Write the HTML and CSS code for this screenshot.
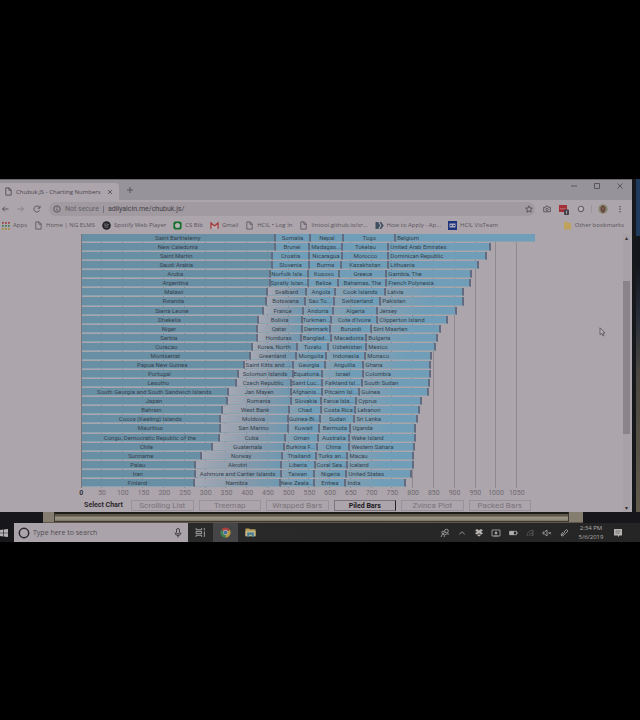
FILE: index.html
```html
<!DOCTYPE html>
<html lang="en">
<head>
<meta charset="utf-8">
<title>Chubuk.JS - Charting Numbers</title>
<link rel="stylesheet" href="styles.css">
</head>
<body>
<svg class="defs" aria-hidden="true">
  <symbol id="doc" viewBox="0 0 9 10"><path d="M1.5 1h3.8l2.2 2.3V9h-6zM5 1v2.6h2.5" fill="none" stroke="currentColor" stroke-width=".9"/></symbol>
</svg>
<div class="screen">
  <div class="monitor">
    <div class="browser">
      <header>
        <div class="tabs">
          <div class="tab"><svg class="icon"><use href="#doc"/></svg><span>Chubuk.JS - Charting Numbers</span>
            <button aria-label="Close tab"><svg viewBox="0 0 6 6"><path d="M1 1l4 4M5 1L1 5"/></svg></button></div>
          <button class="new" aria-label="New tab"><svg viewBox="0 0 8 8"><path d="M4 1v6M1 4h6"/></svg></button>
          <div class="controls">
            <button aria-label="Minimize"><svg viewBox="0 0 8 8"><path d="M1 4h6"/></svg></button>
            <button aria-label="Maximize"><svg viewBox="0 0 8 8"><path d="M1.5 1.5h5v5h-5z"/></svg></button>
            <button aria-label="Close"><svg viewBox="0 0 8 8"><path d="M1.5 1.5l5 5M6.500 1.500l-5 5"/></svg></button>
          </div>
        </div>
        <div class="toolbar">
          <button aria-label="Back"><svg viewBox="0 0 8 8"><path d="M7.500 4H1.500M4 1.500L1.500 4 4 6.500"/></svg></button>
          <button class="dim" aria-label="Forward"><svg viewBox="0 0 8 8"><path d="M.5 4h6M4 1.500L6.500 4 4 6.500"/></svg></button>
          <button aria-label="Reload"><svg viewBox="0 0 8 8"><path d="M6.600 5.300A3 3 0 1 1 6.500 2.500M7 .8v2.400H4.600"/></svg></button>
          <div class="address">
            <svg viewBox="0 0 8 8"><circle cx="4" cy="4" r="3.200"/><path d="M4 3.500v2.300M4 2v.8"/></svg>
            <label for="url">Not secure</label><i></i>
            <input id="url" value="adilyalcin.me/chubuk.js/">
            <button aria-label="Bookmark this page"><svg viewBox="0 0 8 8"><path d="M4 .8l1 2.200 2.400.2-1.800 1.600.6 2.400L4 6l-2.200 1.200.6-2.400L.6 3.200 3 3z"/></svg></button>
          </div>
          <button aria-label="Camera extension"><svg viewBox="0 0 8 8"><path d="M.7 2.300h1.600L3 1.200h2l.7 1.100h1.600v4.500H.7z"/><circle cx="4" cy="4.400" r="1.200"/></svg></button>
          <button class="ext" aria-label="Extension, 1 notice"><svg viewBox="0 0 10 11"><path fill="#a52f37" stroke="none" d="M0 1h8v7H0z"/><path stroke="#c9a6ac" stroke-dasharray="1.300 .7" d="M1.200 4.800h6"/><rect x="5" y="5.500" width="5" height="5.500" rx="1" fill="#444248" stroke="none"/><path stroke="#bbb" d="M7.500 6.800v3"/></svg></button>
          <button aria-label="Sphere extension"><svg viewBox="0 0 8 8"><circle cx="4" cy="4" r="2.800"/><circle cx="3.500" cy="3.500" r="1.500" fill="#bcb7bc" stroke="none"/></svg></button>
          <i class="rule"></i>
          <button class="face" aria-label="Profile"><svg viewBox="0 0 10 10"><circle cx="5" cy="5" r="4.800" fill="#8c8b78" stroke="none"/><path fill="#5d4138" stroke="none" d="M2.500 3.500Q5-.5 7.500 3.500V6q-2.500 6-5 0z"/><path stroke="#9c7568" d="M3.500 4h3M5 4v3"/></svg></button>
          <button class="menu" aria-label="Menu"><svg viewBox="0 0 8 8"><path stroke-width="1.200" stroke-dasharray="1.200 1.300" d="M4 1v6.500"/></svg></button>
        </div>
        <nav>
          <a href="#"><svg class="icon" viewBox="0 0 9 9"><g fill="none" stroke-width="1.700" stroke-dasharray="1.700 1.300"><path stroke="#9e3c40" d="M1 1.800h7.700"/><path stroke="#3f7a5a" d="M1 4.800h7.700"/><path stroke="#a68a3a" d="M1 7.800h7.700"/></g></svg>Apps</a>
          <a href="#"><svg class="icon"><use href="#doc"/></svg>Home | NG ELMS</a>
          <a href="#"><svg class="icon" viewBox="0 0 9 9"><circle cx="4.500" cy="4.500" r="4.300" fill="#242227"/><path d="M2 3.200q2.500-.7 5 .5M2.300 4.700q2-.5 4.200.5M2.500 6.100q1.700-.4 3.400.4" fill="none" stroke="#8f8b90" stroke-width=".7"/></svg>Spotify Web Player</a>
          <a href="#"><svg class="icon" viewBox="0 0 9 9"><rect x=".4" y=".4" width="8.200" height="8.200" rx="2" fill="#16712d"/><circle cx="4.500" cy="4.500" r="2.500" fill="#b7b4b8"/></svg>CS Bib</a>
          <a href="#"><svg class="icon" viewBox="0 0 9 9"><path d="M1 7.800V2l3.500 3L8 2v5.800" fill="#bcb3b7" stroke="#a63b3c" stroke-width="1.300"/></svg>Gmail</a>
          <a href="#"><svg class="icon"><use href="#doc"/></svg>HCIL • Log In</a>
          <a href="#"><svg class="icon"><use href="#doc"/></svg>lintool.github.io/sr...</a>
          <a href="#"><svg class="icon" viewBox="0 0 9 9"><path d="M.5 1h2.700l2 3.500-2 3.500H.5z" fill="#3e5061"/><path d="M4.500 1h1.700l2.500 3.500L6.200 8H4.500l2-3.500z" fill="#3e5061"/></svg>How to Apply - Ap...</a>
          <a href="#"><svg class="icon" viewBox="0 0 9 9"><path d="M0 0h9v9H0z" fill="#1f327e"/><path d="M1.500 2.500h6v4h-6z" fill="#aaa9ba"/><path d="M2 4.500h2M5 4.500h2" stroke="#1f327e"/></svg>HCIL VisTeam</a>
          <a class="other" href="#"><svg class="icon" viewBox="0 0 9 9"><path d="M1 .8h3l1 1.200h3v6.500H1z" fill="#bfa25c"/></svg>Other bookmarks</a>
        </nav>
      </header>
      <main>
        <section class="content">
          <div class="figure">
            <div class="lines" id="lines"></div>
            <div class="plot" id="plot"></div>
          </div>
          <div class="axis" id="axis"></div>
          <div class="charts">
            <b>Select Chart</b>
            <button>Scrolling List</button><button>Treemap</button><button>Wrapped Bars</button><button class="on">Piled Bars</button><button>Zvinca Plot</button><button>Packed Bars</button>
          </div>
        </section>
        <div class="scroll"><span>▴</span><div></div><span>▾</span></div>
        <svg class="cursor" viewBox="0 0 7 10"><path d="M1 .8v7l1.800-1.500L4 9l1-.5-1.100-2.500H6z" fill="#b9b4b9" stroke="#565257" stroke-width=".8"/></svg>
      </main>
    </div>
    <div class="edge"></div>
    <div class="room"></div>
  </div>
  <div class="desktop"><div class="paper"><div></div></div></div>
  <footer>
    <button class="start" aria-label="Start"><svg viewBox="0 0 8 8"><path fill="#b5b2b6" stroke="none" d="M0 1l3.200-.5v3.200H0zM3.800.4L8 0v3.700H3.800zM0 4.300h3.200v3.200L0 7zM3.800 4.300H8V8l-4.200-.5z"/></svg></button>
    <label class="search"><svg viewBox="0 0 12 12"><circle cx="6" cy="6" r="4.700" stroke-width="1.500"/></svg><input placeholder="Type here to search" aria-label="Search"><svg viewBox="0 0 12 12"><rect x="4.500" y="1.500" width="3" height="5.500" rx="1.500"/><path d="M3 5.500q0 3 3 3t3-3M6 8.500v2"/></svg></label>
    <button class="app" aria-label="Task view"><svg viewBox="0 0 10 10"><path d="M1 1v1.500h5V1M1 9V7.500h5V9M1 4h5v2H1zM8.500 1v2M8.500 4v5"/></svg></button>
    <button class="app lit" aria-label="Chrome"><svg viewBox="0 0 12 12"><g stroke="none"><path fill="#a8433b" d="M6 6L1.200 3.200a5.600 5.600 0 0 1 9.700.1z"/><path fill="#b89a3d" d="M6 6l4.900-2.700A5.600 5.600 0 0 1 6 11.600z"/><path fill="#3f8250" d="M6 6v5.600A5.600 5.600 0 0 1 1.200 3.200z"/><circle cx="6" cy="6" r="2.700" fill="#b9b7ba"/><circle cx="6" cy="6" r="2" fill="#40699d"/></g></svg></button>
    <button class="app" aria-label="File Explorer"><svg viewBox="0 0 12 12"><g stroke="none"><path fill="#b39a54" d="M.5 1.500h4l1 1h6V10H.5z"/><path fill="#c2b283" d="M.5 4h11v6H.5z"/><path fill="#3e7e9c" d="M2.500 6h7v5H7.500V8.500h-3V11h-2z"/></g></svg></button>
    <div class="tray">
      <svg viewBox="0 0 10 10"><circle cx="6.500" cy="3" r="1.800"/><circle cx="3" cy="4.500" r="1.300"/><path d="M1 9q1-4 3.500-2.500M4 9q1-4 5-3"/></svg>
      <svg viewBox="0 0 10 10"><path d="M2.300 6.300L5 3.700l2.700 2.600"/></svg>
      <svg viewBox="0 0 10 10"><path stroke="none" fill="#b5b2b0" d="M3 1l2 1.300L7 1l2 1.400L7 3.800l2 1.500-2 1.400-2-1.400-2 1.400-2-1.400 2-1.500-2-1.400zM3.200 7.400L5 6.200l1.800 1.200L5 8.600z"/></svg>
      <svg viewBox="0 0 10 10"><path d="M1 2h8v6H1zM3 8h4"/><circle cx="5" cy="5" r="1" fill="#b5b2b0"/></svg>
      <svg viewBox="0 0 10 10"><path d="M1.500 3.300h7v3.400h-7zM9.300 4.300v1.400"/><path fill="#b5b2b0" d="M2 3.500h3.500v3H2z"/></svg>
      <svg class="faint" viewBox="0 0 10 10"><path d="M2 8Q2 3 8 2v6M4 8q0-3 4-3.500M6 8q0-1 2-1.500"/></svg>
      <svg viewBox="0 0 10 10"><path d="M1 4h1.500L5 2v6L2.500 6H1zM6.500 4l2.300 2.300M8.800 4L6.500 6.300"/></svg>
      <svg viewBox="0 0 10 10"><path d="M2 8l2-2M3.500 4.500l2 2-2 1.500-1.500-1zM5 4l2.500-2.500 1.500 1.500L6.500 5.500z"/></svg>
    </div>
    <div class="clock">2:34 PM<br>5/6/2019</div>
    <button class="notice" aria-label="Notifications"><svg viewBox="0 0 10 10"><path fill="#b5b2b0" stroke="none" d="M1 1h8v6.500H6.500L5 9.300V7.500H1z"/><path stroke="#6b686a" d="M2.500 3h5M2.500 5h4"/></svg></button>
  </footer>
</div>
<script src="chart.js"></script>
</body>
</html>
```
FILE: styles.css
```css
* { box-sizing: border-box; }
body { margin: 0; background: #000; color: #4b474d; font: 6px/8px "Open Sans", "Noto Sans", sans-serif; }
button, input { font: inherit; color: inherit; border: 0; background: none; padding: 0; margin: 0; }
svg { display: block; width: 8px; height: 8px; fill: none; stroke: currentColor; stroke-width: .8; flex: none; }
a { color: inherit; text-decoration: none; }
.defs { position: absolute; width: 0; height: 0; }
.icon { width: 9px; height: 9px; stroke: none; }
.screen { margin-top: 179px; background: #242326; }
.monitor { display: flex; }
.browser { flex: 1; min-width: 0; background: #aca5ab; }
.edge { width: 4px; background: #17181c; }
.room { width: 4px; background: linear-gradient(#1e3a5c 0 17%, #13161b 17% 25%, #252b38 40%, #4b4740 58%, #625a4b); }

.tabs { display: flex; align-items: center; height: 21px; background: #97939a; border-top: 1px solid #6d6a6f; }
.tab { display: flex; align-items: center; align-self: flex-end; height: 17px; width: 119px; padding: 0 6px 0 4px; gap: 3px; background: #aca5ab; border-radius: 0 4px 0 0; }
.tab span { flex: 1; white-space: nowrap; }
.tab button svg { width: 6px; height: 6px; }
.new { margin-left: 7px; }
.controls { display: flex; gap: 15px; margin-left: auto; margin-right: 8px; align-self: flex-start; padding-top: 2px; }
.toolbar { display: flex; align-items: center; gap: 8px; height: 18px; padding: 0 8px 0 1px; font-size: 7px; }
.dim { opacity: .45; }
.address { flex: 1; display: flex; align-items: center; gap: 4px; height: 14px; padding: 0 2px 0 4px; border-radius: 7px; background: #a19ba1; font-family: Roboto, sans-serif; }
.address label { color: #666168; white-space: nowrap; }
.address i { width: 1px; height: 7px; background: #777278; }
.address input { flex: 1; min-width: 0; color: #464248; height: 10px; }
.ext svg { width: 10px; height: 11px; }
.rule { width: 1px; height: 8px; margin: 0 -2px; background: #9b959b; }
.face svg { width: 10px; height: 10px; }
nav { display: flex; align-items: center; gap: 7px; height: 16px; padding: 0 8px 2px 1px; white-space: nowrap; color: #5a555c; }
nav a { display: flex; align-items: center; gap: 3px; }
nav a.other { margin-left: auto; }

main { display: flex; position: relative; height: 278px; }
.content { flex: 1; min-width: 0; padding-left: 81px; padding-right: 88px; font-family: Roboto, sans-serif; }
.figure { display: grid; height: 254px; }
.lines, .plot { grid-area: 1 / 1; min-width: 0; }
.lines { display: flex; margin-right: 18px; }
.lines span { flex: 1; border-right: 1px solid #8d898f; }
.plot { display: grid; grid-auto-rows: 1fr; border-left: 1px solid #77737a; }
.row { display: flex; padding-bottom: 1px; min-height: 0; position: relative; }
.seg { flex: none; height: 100%; border: 0 solid #626b7f; border-right-width: 2px; border-bottom: 1px solid #8aa3b2; background: #709eb8; color: #36424d; line-height: 7px; text-align: center; white-space: nowrap; overflow: hidden; }
.seg:first-child { background: #698fa5; }
.row:first-child .seg:last-child { border-right-color: #709eb8; }
.seg:last-child { text-align: left; padding-left: 1px; }
.pale { background: linear-gradient(to right, #a4a8b4, #8599ab 60%, #6f98b0); }
.soft { background: linear-gradient(to right, #869fb1, #709eb8 60%); }
.axis { display: flex; height: 10px; margin: 0 8px 2px -10px; align-items: center; font-size: 7px; color: #6f6a71; }
.axis span { flex: 1 0 0; min-width: 0; display: flex; justify-content: center; }
.axis span:first-child { color: #333036; font-weight: 700; }
.charts { display: flex; gap: 5px; margin-right: 4px; height: 11px; line-height: 8px; font-size: 8px; }
.charts b { width: 45px; padding-top: 1px; text-align: center; font-size: 7px; font-weight: 700; color: #2c292e; white-space: nowrap; }
.charts button { flex: 1; border: 1px solid #98929a; color: #79747b; white-space: nowrap; }
.charts .on { border-color: #7b767d; border-right-color: #242127; color: #1a181c; font-weight: 700; font-size: 7px; }
.scroll { width: 7px; margin-right: 2px; background: #a8a2a8; display: flex; flex-direction: column; justify-content: space-between; text-align: center; color: #343136; }
.scroll div { height: 153px; margin-bottom: 32px; background: #89848a; }
.cursor { position: absolute; left: 94.700%; top: 93px; width: 7px; height: 10px; }

.desktop { height: 11px; padding: 0 57px 0 43px; background: #17171b; }
.paper { height: 11px; padding: 0 14px 0 11px; background: #857e70; border-bottom: 1px solid #5e574b; }
.paper div { height: 10px; border: 1px solid #3e3932; border-top: 2px solid #1e1b18; background: linear-gradient(#5e5749 2px, #969080 3px 5px, #777061); }

footer { display: flex; align-items: center; height: 19px; background: linear-gradient(to right, #171719, #292929 30%, #262525); color: #b0adae; }
.start { width: 14px; }
.search { display: flex; align-items: center; width: 174px; height: 19px; padding: 0 4px; gap: 3px; background: #aaa3aa; color: #29272c; }
.search svg { width: 12px; height: 12px; }
.search input { flex: 1; min-width: 0; font-size: 7px; }
.search input::placeholder { color: #514c53; opacity: 1; }
.app { width: 25px; height: 19px; display: grid; place-items: center; }
.app svg { width: 11px; height: 11px; }
.lit { background: #454447; }
.tray { display: flex; gap: 7px; margin-left: auto; }
.tray svg { width: 10px; height: 10px; }
.faint { opacity: .4; }
.clock { width: 44px; text-align: center; line-height: 9px; }
.notice { margin-right: 17px; }
.notice svg { width: 10px; height: 10px; }
```
FILE: chart.js
```js
// Each row: five segment names, then the right end of each segment.
const rows = `Saint Barthelemy|Somalia|Nepal|Togo|Belgium|193|229|262|314|454
New Caledonia|Brunei|Madagas...|Tokelau|United Arab Emirates|193|228|261|307|409
Saint Martin|Croatia|Nicaragua|Morocco|Dominican Republic|190|228|261|307|405
Saudi Arabia|Slovenia|Burma|Kazakhstan|Lithuania|190|228|260|307|397
Aruba|Norfolk Isla...|Kosovo|Greece|Gambia, The|188|227|258|305|390
Argentina|Spratly Islan...|Belize|Bahamas, The|French Polynesia|188|227|257|305|389
Malawi|Svalbard|Angola|Cook Islands|Latvia|185|225|254|304|382
Rwanda|Botswana|Sao To...|Switzerland|Pakistan|184|224|253|299|382
Sierra Leone|France|Andorra|Algeria|Jersey|181|221|252|296|375
Dhekelia|Bolivia|Turkmen...|Cote d'Ivoire|Clipperton Island|176|220|250|296|366
Niger|Qatar|Denmark|Burundi|Sint Maarten|175|220|249|290|359
Serbia|Honduras|Banglad...|Macedonia|Bulgaria|175|219|250|285|356
Curacao|Korea, North|Tuvalu|Uzbekistan|Mexico|170|215|247|285|354
Montserrat|Greenland|Mongolia|Indonesia|Monaco|168|214|245|284|350
Papua New Guinea|Saint Kitts and ...|Georgia|Anguilla|Ghana|162|211|244|282|349
Portugal|Solomon Islands|Equatoria...|Israel|Colombia|156|211|241|282|349
Lesotho|Czech Republic|Saint Luc...|Falkland Isl...|South Sudan|154|209|241|281|348
South Georgia and South Sandwich Islands|Jan Mayen|Afghanis...|Pitcairn Isl...|Guinea|146|209|241|278|347
Japan|Romania|Slovakia|Faroe Isla...|Cyprus|145|209|240|275|340
Bahrain|West Bank|Chad|Costa Rica|Lebanon|140|207|240|274|338
Cocos (Keeling) Islands|Moldova|Guinea-Bi...|Sudan|Sri Lanka|138|206|239|273|336
Mauritius|San Marino|Kuwait|Bermuda|Uganda|138|206|238|269|334
Congo, Democratic Republic of the|Cuba|Oman|Australia|Wake Island|137|203|237|268|334
Chile|Guatemala|Burkina F...|China|Western Sahara|130|202|236|268|333
Suriname|Norway|Thailand|Turks an...|Macau|119|200|235|266|332
Palau|Akrotiri|Liberia|Coral Sea...|Iceland|113|199|234|266|332
Iran|Ashmore and Cartier Islands|Taiwan|Nigeria|United States|113|199|233|265|330
Finland|Namibia|New Zeala...|Eritrea|India|112|198|233|264|324`;

const plot = document.getElementById('plot');
rows.split('\n').forEach((line, r) => {
  const cells = line.split('|');
  const row = document.createElement('div');
  row.className = 'row';
  let start = 0;
  for (let i = 0; i < 5; i++) {
    const end = Number(cells[i + 5]) + (i < 4 || r > 0 ? 1 : 0);
    const seg = document.createElement('div');
    seg.className = 'seg';
    if (i === 1 && r > 5) seg.classList.add('pale');
    if (i > 1 && r > 5) seg.classList.add('soft');
    seg.style.width = (end - start) / 454 * 100 + '%';
    seg.textContent = cells[i];
    row.append(seg);
    start = end;
  }
  plot.append(row);
});

const axis = document.getElementById('axis');
const lines = document.getElementById('lines');
for (let v = 0; v <= 1050; v += 50) {
  const tick = document.createElement('span');
  tick.textContent = v;
  axis.append(tick);
  if (v > 0) lines.append(document.createElement('span'));
}
```
